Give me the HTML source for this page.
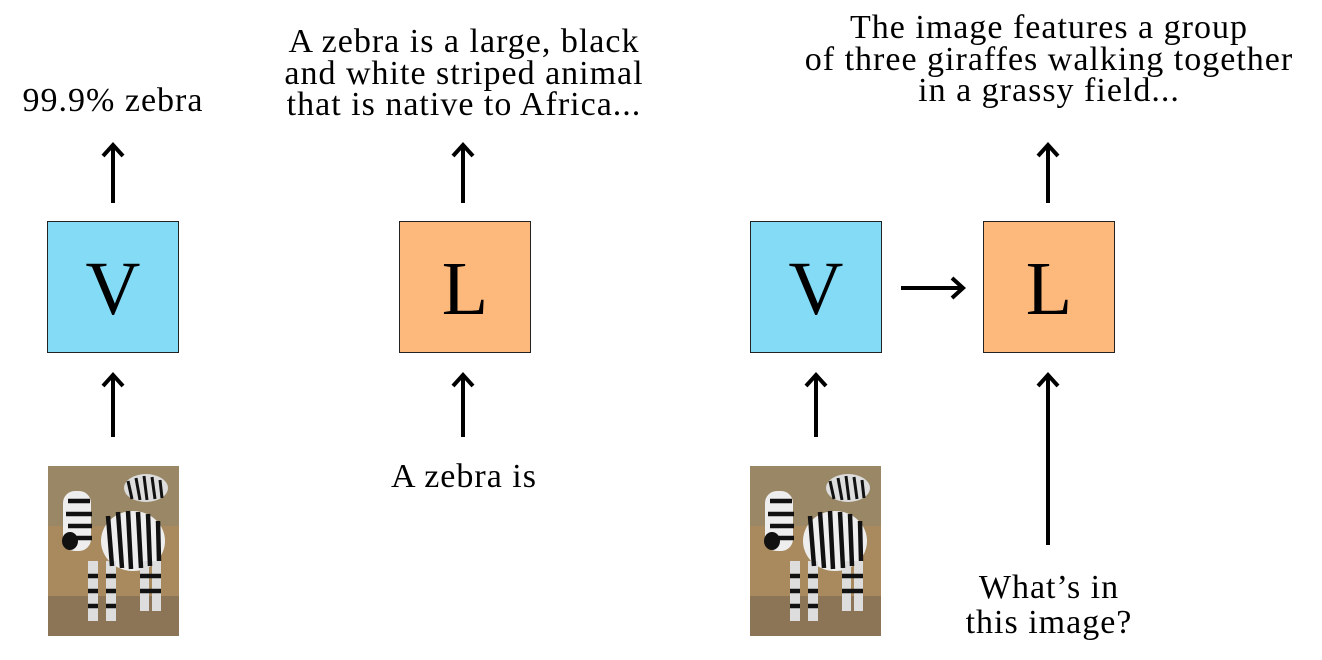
<!DOCTYPE html>
<html><head><meta charset="utf-8"><style>
body{margin:0;width:1322px;height:660px;background:#fff;position:relative;overflow:hidden;font-family:"Liberation Serif",serif;color:#000}
.t{position:absolute;text-align:center;font-size:34px;letter-spacing:1px;line-height:31.5px;white-space:nowrap;transform:translateX(-50%)}
.box{position:absolute;width:130px;height:130px;border:1.5px solid #222;font-size:76px;text-align:center;line-height:134px}
.v{background:#84dbf6}.l{background:#fdb97b}
svg{position:absolute;left:0;top:0}
</style></head><body>
<div class="t" style="left:113px;top:85px">99.9% zebra</div>
<div class="t" style="left:464px;top:26px">A zebra is a large, black<br>and white striped animal<br>that is native to Africa...</div>
<div class="t" style="left:1049px;top:12px">The image features a group<br>of three giraffes walking together<br>in a grassy field...</div>
<div class="t" style="left:464px;top:461px">A zebra is</div>
<div class="t" style="left:1049px;top:570px;line-height:35px">What’s in<br>this image?</div>
<div class="box v" style="left:47px;top:221px">V</div>
<div class="box l" style="left:399px;top:221px">L</div>
<div class="box v" style="left:750px;top:221px">V</div>
<div class="box l" style="left:983px;top:221px">L</div>
<svg width="1322" height="660">
<defs><g id="zeb">
<rect width="131" height="170" fill="#a88a5e"/>
<rect y="0" width="131" height="60" fill="#9a8766"/>
<rect y="130" width="131" height="40" fill="#8c7556"/>
<ellipse cx="98" cy="22" rx="22" ry="14" fill="#ddd"/>
<path d="M80 15l4 18M88 12l4 22M96 10l3 24M104 11l3 22M112 14l2 18" stroke="#111" stroke-width="3"/>
<ellipse cx="85" cy="75" rx="32" ry="30" fill="#eee"/>
<rect x="15" y="25" width="28" height="60" rx="12" fill="#eee"/>
<rect x="40" y="95" width="10" height="60" fill="#ddd"/>
<rect x="58" y="95" width="10" height="60" fill="#ddd"/>
<rect x="92" y="95" width="9" height="50" fill="#ddd"/>
<rect x="104" y="95" width="9" height="50" fill="#ddd"/>
<path d="M60 50l4 50M70 46l4 56M80 45l3 58M90 46l3 56M100 48l2 52M110 55l1 40M20 35h22M18 48h26M20 60h24M22 72h22M40 110h10M40 125h10M40 140h10M58 110h10M58 125h10M58 140h10M92 110h21M92 125h21" stroke="#111" stroke-width="4.5"/>
<ellipse cx="22" cy="75" rx="8" ry="9" fill="#111"/>
</g></defs>
<use href="#zeb" x="48" y="466"/>
<use href="#zeb" x="750" y="466"/>
<g stroke="#000" stroke-width="4" fill="none">
<path d="M113 203V146M103 156l10-11 10 11"/>
<path d="M113 437V376M103 386l10-11 10 11"/>
<path d="M463 203V146M453 156l10-11 10 11"/>
<path d="M463 437V376M453 386l10-11 10 11"/>
<path d="M1048 203V146M1038 156l10-11 10 11"/>
<path d="M816 437V376M806 386l10-11 10 11"/>
<path d="M1048 545V376M1038 386l10-11 10 11"/>
<path d="M901 288H962M952 278l11 10-11 10"/>
</g>
</svg>
</body></html>
